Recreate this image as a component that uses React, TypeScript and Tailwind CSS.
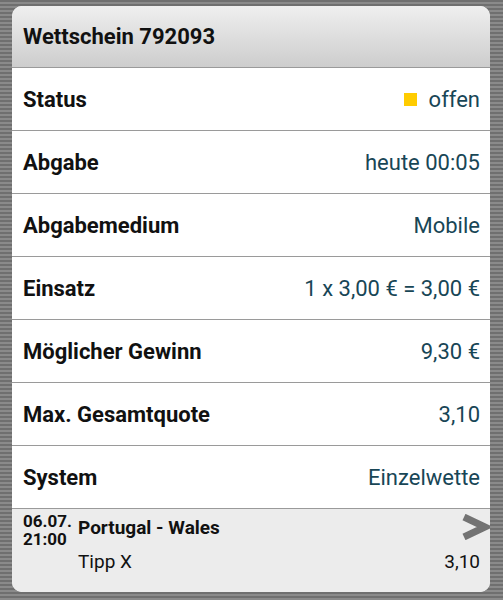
import React from "react";

const rows = [
  { label: "Status", value: "offen", status: true },
  { label: "Abgabe", value: "heute 00:05" },
  { label: "Abgabemedium", value: "Mobile" },
  { label: "Einsatz", value: "1 x 3,00 € = 3,00 €" },
  { label: "Möglicher Gewinn", value: "9,30 €" },
  { label: "Max. Gesamtquote", value: "3,10" },
  { label: "System", value: "Einzelwette" },
];

const App: React.FC = () => {
  return (
    <div
      className="w-[503px] h-[600px] pt-[6px] pl-[12px] pr-[13px] bg-[repeating-linear-gradient(180deg,#6f6f6f_0px,#6f6f6f_2px,#8a8a8a_2px,#8a8a8a_4px)]"
      style={{ fontFamily: "Roboto, 'Liberation Sans', sans-serif" }}
    >
      <div className="h-[586px] rounded-[10px] overflow-hidden bg-white flex flex-col">
        {/* header */}
        <div className="h-[62px] shrink-0 flex items-center pl-[11px] border-b border-[#9a9a9a] bg-[linear-gradient(180deg,#efefef,#cdcdcd)]">
          <span className="text-[22px] font-bold text-[#111]">Wettschein 792093</span>
        </div>

        {rows.map((row) => (
          <div
            key={row.label}
            className="h-[63px] shrink-0 flex items-center justify-between pl-[11px] pr-[10px] border-b border-[#9a9a9a]"
          >
            <span className="text-[22px] font-bold text-[#111]">{row.label}</span>
            <span className="flex items-center text-[22px] text-[#184656]">
              {row.status && <span className="w-[13px] h-[13px] bg-[#ffcc00] mr-[12px]" />}
              {row.value}
            </span>
          </div>
        ))}

        {/* bet detail */}
        <div className="flex-1 bg-[#ececec] flex pl-[11px] pt-[4px]">
          <div className="w-[55px] shrink-0 text-[17px] font-bold leading-[18px] text-[#111] mt-[-1px]">
            <div>06.07.</div>
            <div>21:00</div>
          </div>
          <div className="flex-1 flex flex-col">
            <div className="flex items-start justify-between">
              <span className="text-[19px] font-bold text-[#111] mt-[1px]">Portugal - Wales</span>
              <svg width="30" height="26" viewBox="0 0 30 26" className="mt-[1px]">
                <polyline
                  points="4,3 25,13 4,23"
                  fill="none"
                  stroke="#737373"
                  strokeWidth="7"
                  strokeLinejoin="miter"
                />
              </svg>
            </div>
            <div className="flex justify-between pr-[10px] mt-[5px] text-[19px] text-[#111]">
              <span>Tipp X</span>
              <span>3,10</span>
            </div>
          </div>
        </div>
      </div>
    </div>
  );
};

export default App;
